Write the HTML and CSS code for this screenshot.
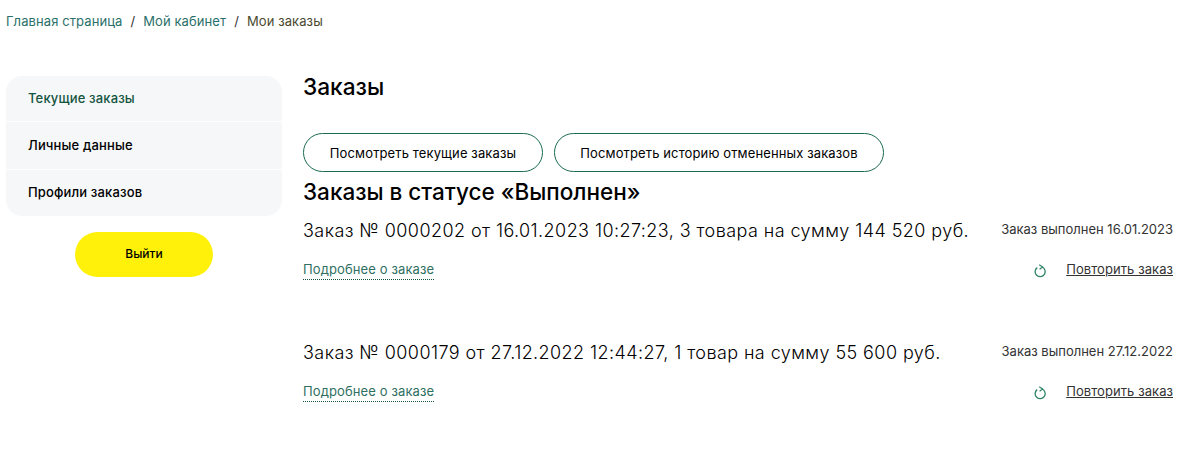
FILE: index.html
```html
<!DOCTYPE html>
<html lang="ru">
<head>
<meta charset="utf-8">
<title>Мои заказы</title>
<link rel="stylesheet" href="styles.css">
</head>
<body>
<nav class="crumbs">
  <a class="crumb">Главная страница</a><span class="sep">/</span><a class="crumb">Мой кабинет</a><span class="sep">/</span><span class="crumb-current">Мои заказы</span>
</nav>
<div class="layout">
  <aside class="side">
    <ul class="menu">
      <li class="menu-item active">Текущие заказы</li>
      <li class="menu-item">Личные данные</li>
      <li class="menu-item">Профили заказов</li>
    </ul>
    <a class="logout">Выйти</a>
  </aside>
  <main class="content">
    <h1 class="title">Заказы</h1>
    <div class="buttons">
      <a class="pill pill-current">Посмотреть текущие заказы</a>
      <a class="pill pill-history">Посмотреть историю отмененных заказов</a>
    </div>
    <h2 class="status-title">Заказы в статусе «Выполнен»</h2>
    <article class="order">
      <div class="order-top">
        <span class="order-name">Заказ № 0000202 от 16.01.2023 10:27:23, 3 товара на сумму 144 520 руб.</span>
        <span class="order-status">Заказ выполнен 16.01.2023</span>
      </div>
      <div class="order-bottom">
        <a class="more">Подробнее о заказе</a>
        <span class="repeat">
          <svg class="repeat-icon" width="12" height="14" viewBox="0 0 12 14"><path d="M3.2 3.6A5 5 0 1 0 8 3" fill="none" stroke="#2f8465" stroke-width="1.3"/><path d="M5.2 .8 8.6 3 5.6 5.2" fill="none" stroke="#2f8465" stroke-width="1.2"/></svg>
          <a class="repeat-link">Повторить заказ</a>
        </span>
      </div>
    </article>
    <article class="order">
      <div class="order-top">
        <span class="order-name">Заказ № 0000179 от 27.12.2022 12:44:27, 1 товар на сумму 55 600 руб.</span>
        <span class="order-status">Заказ выполнен 27.12.2022</span>
      </div>
      <div class="order-bottom">
        <a class="more">Подробнее о заказе</a>
        <span class="repeat">
          <svg class="repeat-icon" width="12" height="14" viewBox="0 0 12 14"><path d="M3.2 3.6A5 5 0 1 0 8 3" fill="none" stroke="#2f8465" stroke-width="1.3"/><path d="M5.2 .8 8.6 3 5.6 5.2" fill="none" stroke="#2f8465" stroke-width="1.2"/></svg>
          <a class="repeat-link">Повторить заказ</a>
        </span>
      </div>
    </article>
  </main>
</div>
</body>
</html>
```
FILE: styles.css
```css
* { box-sizing: border-box; }
html, body { margin: 0; padding: 0; }
body {
  background: #fff;
  color: #000;
  font-family: Inter, "Noto Sans", sans-serif;
  height: 465px;
  overflow: hidden;
}
.crumbs {
  height: 76px;
  padding: 13px 0 0 6px;
  font-size: 13px;
  line-height: 17px;
  letter-spacing: .09px;
  color: #2a6f6a;
}
.sep { margin: 0 8px; color: #333; }
.crumb-current { color: #4a4a30; }
.layout { display: flex; padding-left: 6px; padding-right: 15px; }
.side { width: 276px; flex: none; display: flex; flex-direction: column; align-items: center; }
.menu {
  list-style: none;
  margin: 0;
  padding: 0;
  width: 100%;
  height: 140px;
  background: #f6f7f9;
  border-radius: 16px;
}
.menu-item {
  height: 48px;
  padding: 0 22px 2px;
  display: flex;
  align-items: center;
  font-size: 13px;
  font-weight: 500;
  letter-spacing: .15px;
  border-bottom: 1px solid #fff;
}
.menu-item:first-child { height: 46px; }
.menu-item:last-child { border-bottom: 0; height: 46px; }
.active { color: #14543f; }
.logout {
  width: 138px;
  height: 45px;
  margin-top: 16px;
  padding-bottom: 2px;
  background: #fff10a;
  border-radius: 23px;
  display: flex;
  align-items: center;
  justify-content: center;
  font-size: 12px;
  font-weight: 500;
}
.content { flex: 1; margin-left: 21px; }
.title { margin: 0; font-size: 22.7px; line-height: 22px; font-weight: 500; }
.buttons { display: flex; gap: 11px; margin-top: 35px; }
.pill {
  height: 39px;
  border: 1px solid #1a6b50;
  border-radius: 20px;
  display: flex;
  align-items: center;
  justify-content: center;
  font-size: 13px;
  letter-spacing: .12px;
}
.pill-current { width: 240px; }
.pill-history { width: 330px; flex: none; }
.status-title { margin: 6px 0 0; font-size: 22.5px; line-height: 28px; font-weight: 500; }
.order { height: 122px; padding-top: 12px; }
.order-top { display: flex; justify-content: space-between; align-items: center; height: 24px; }
.order-name { font-size: 18px; font-weight: 350; letter-spacing: .42px; color: #000; }
.order-status { font-size: 13px; color: #333; padding-bottom: 2px; }
.order-bottom { display: flex; justify-content: space-between; align-items: center; margin-top: 17px; }
.more {
  font-size: 13px;
  line-height: 19px;
  letter-spacing: .12px;
  color: #2f6f62;
  border-bottom: 1px dotted #14543f;
}
.repeat { display: flex; align-items: center; gap: 20px; padding-bottom: 2px; }
.repeat-icon { display: block; margin-top: 5px; }
.repeat-link { font-size: 13px; letter-spacing: .07px; color: #333; text-decoration: underline; }
```
